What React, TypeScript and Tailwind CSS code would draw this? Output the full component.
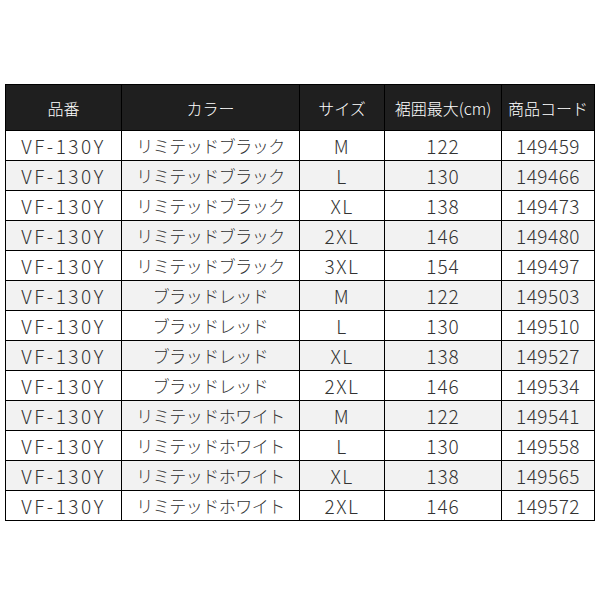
import React from "react";

const rows: [string, string, string, string, string][] = [
  ["VF-130Y", "リミテッドブラック", "M", "122", "149459"],
  ["VF-130Y", "リミテッドブラック", "L", "130", "149466"],
  ["VF-130Y", "リミテッドブラック", "XL", "138", "149473"],
  ["VF-130Y", "リミテッドブラック", "2XL", "146", "149480"],
  ["VF-130Y", "リミテッドブラック", "3XL", "154", "149497"],
  ["VF-130Y", "ブラッドレッド", "M", "122", "149503"],
  ["VF-130Y", "ブラッドレッド", "L", "130", "149510"],
  ["VF-130Y", "ブラッドレッド", "XL", "138", "149527"],
  ["VF-130Y", "ブラッドレッド", "2XL", "146", "149534"],
  ["VF-130Y", "リミテッドホワイト", "M", "122", "149541"],
  ["VF-130Y", "リミテッドホワイト", "L", "130", "149558"],
  ["VF-130Y", "リミテッドホワイト", "XL", "138", "149565"],
  ["VF-130Y", "リミテッドホワイト", "2XL", "146", "149572"],
];

const headers = ["品番", "カラー", "サイズ", "裾囲最大(cm)", "商品コード"];

const cellStyles = [
  "text-[19px] tracking-[2.5px]",
  "text-[17px] tracking-[-0.5px]",
  "text-[19px] tracking-[1.5px]",
  "text-[19px] tracking-[1px]",
  "text-[19px] tracking-[0.5px]",
];

export default function App() {
  return (
    <div className="w-[600px] h-[600px] bg-white pt-[84px] pl-[5px]" style={{ fontFamily: '"Noto Sans CJK JP", "Noto Sans", sans-serif' }}>
      <table className="border-collapse table-fixed w-[589px] border border-black">
        <colgroup>
          <col className="w-[116px]" />
          <col className="w-[178px]" />
          <col className="w-[85px]" />
          <col className="w-[117px]" />
          <col className="w-[93px]" />
        </colgroup>
        <thead>
          <tr className="bg-[#1f1f1f] h-[46px]">
            {headers.map((h) => (
              <th key={h} className="border-x border-black text-white font-light text-[16px] text-center p-0 whitespace-nowrap">
                {h}
              </th>
            ))}
          </tr>
        </thead>
        <tbody>
          {rows.map((r, i) => (
            <tr key={i} className={i % 2 === 1 ? "bg-[#f2f2f2] h-[30px]" : "bg-white h-[30px]"}>
              {r.map((c, j) => (
                <td key={j} className={"border border-black text-center p-0 font-light text-[#333] leading-none whitespace-nowrap " + cellStyles[j]}>
                  {c}
                </td>
              ))}
            </tr>
          ))}
        </tbody>
      </table>
    </div>
  );
}
